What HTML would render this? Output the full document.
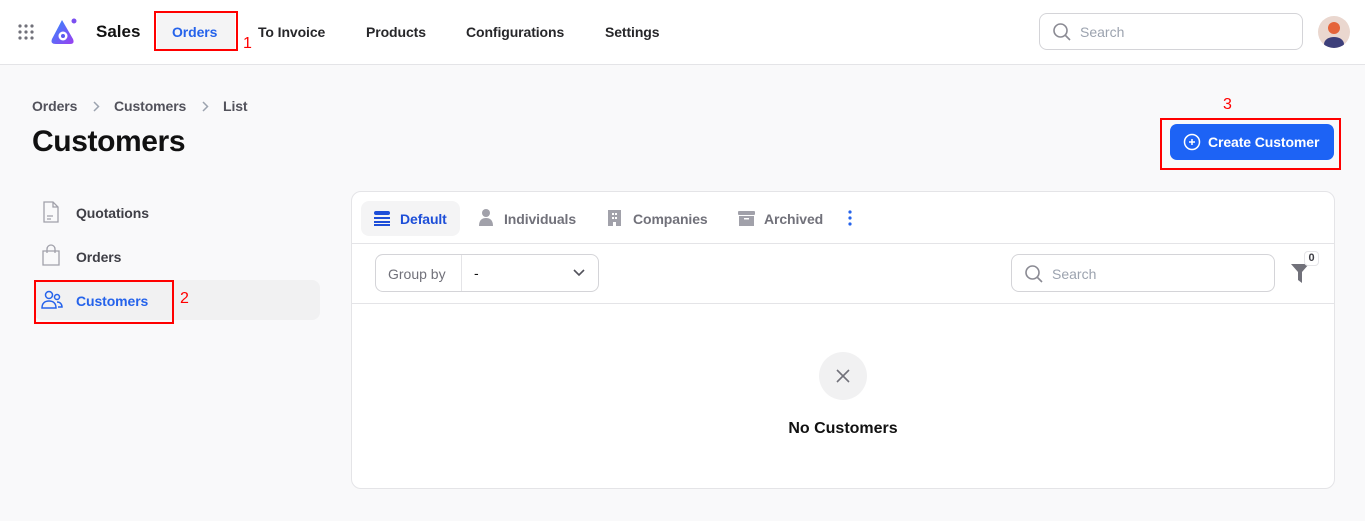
<!DOCTYPE html>
<html><head><meta charset="utf-8"><style>
*{box-sizing:border-box;margin:0;padding:0}
body{width:1365px;height:521px;background:#f9f9fa;font-family:"Liberation Sans",sans-serif;position:relative;overflow:hidden;color:#111}
.abs{position:absolute}
.hdr{left:0;top:0;width:1365px;height:65px;background:#fff;border-bottom:1px solid #e4e4e7}
.nav{font-size:14px;font-weight:bold;color:#27272a;top:24px;letter-spacing:-0.1px}
.red{border:2px solid #f00}
.rn{color:#f00;font-size:16px}
.side{font-size:14px;font-weight:bold;color:#3f3f46;letter-spacing:-0.1px}
.card{left:351px;top:191px;width:984px;height:298px;background:#fff;border:1px solid #e4e4e7;border-radius:10px}
.tab{font-size:14px;font-weight:bold;color:#71717a;top:19px;letter-spacing:-0.1px}
.bc{top:98px;font-size:14px;font-weight:bold;color:#52525b;letter-spacing:-0.1px}
</style></head><body>
<div class="abs hdr"></div>
<svg class="abs" style="left:18px;top:24px" width="16" height="16" viewBox="0 0 16 16" fill="#71717a"><circle cx="2" cy="2" r="1.6"/><circle cx="8" cy="2" r="1.6"/><circle cx="14" cy="2" r="1.6"/><circle cx="2" cy="8" r="1.6"/><circle cx="8" cy="8" r="1.6"/><circle cx="14" cy="8" r="1.6"/><circle cx="2" cy="14" r="1.6"/><circle cx="8" cy="14" r="1.6"/><circle cx="14" cy="14" r="1.6"/></svg>
<svg class="abs" style="left:50px;top:17px" width="30" height="28" viewBox="0 0 30 28"><defs><linearGradient id="g" x1="0" y1="0" x2="1" y2="1"><stop offset="0" stop-color="#2b8cff"/><stop offset="1" stop-color="#9b3ff0"/></linearGradient></defs><path d="M12 3 L2 22 Q0 27 6 27 L20 27 Q25 27 23 22 Z" fill="url(#g)"/><circle cx="13" cy="19" r="4.5" fill="#fff"/><circle cx="13" cy="19" r="2" fill="#5a5af0"/><circle cx="24" cy="4" r="2.5" fill="#7b4ff0"/></svg>
<div class="abs" style="left:96px;top:22px;font-size:17px;font-weight:bold">Sales</div>
<div class="abs" style="left:157px;top:13px;width:78px;height:36px;background:#f4f4f5"></div>
<div class="abs red" style="left:154px;top:11px;width:84px;height:40px"></div>
<div class="abs nav" style="left:172px;color:#2563eb">Orders</div>
<div class="abs rn" style="left:243px;top:35px">1</div>
<div class="abs nav" style="left:258px">To Invoice</div>
<div class="abs nav" style="left:366px">Products</div>
<div class="abs nav" style="left:466px">Configurations</div>
<div class="abs nav" style="left:605px">Settings</div>
<div class="abs" style="left:1039px;top:13px;width:264px;height:37px;border:1px solid #d4d4d8;border-radius:8px;background:#fff"></div>
<svg class="abs" style="left:1052px;top:22px" width="20" height="20" viewBox="0 0 20 20" fill="none" stroke="#8a8a93" stroke-width="1.6"><circle cx="8.5" cy="8.5" r="6.5"/><path d="M13.5 13.5 L18 18"/></svg>
<div class="abs" style="left:1080px;top:24px;font-size:14px;color:#9ca3af">Search</div>
<div class="abs" style="left:1318px;top:16px;width:32px;height:32px;border-radius:50%;background:#ead7cf;overflow:hidden"><div class="abs" style="left:6px;top:21px;width:20px;height:14px;border-radius:50% 50% 0 0;background:#3d3f7a"></div><div class="abs" style="left:10px;top:6px;width:12px;height:12px;border-radius:50%;background:#e5643a"></div></div>
<div class="abs bc" style="left:32px">Orders</div>
<svg class="abs" style="left:93px;top:101px" width="7" height="11" viewBox="0 0 7 11" fill="none" stroke="#9ca3af" stroke-width="1.5"><path d="M1 1l4.5 4.5L1 10"/></svg>
<div class="abs bc" style="left:114px">Customers</div>
<svg class="abs" style="left:202px;top:101px" width="7" height="11" viewBox="0 0 7 11" fill="none" stroke="#9ca3af" stroke-width="1.5"><path d="M1 1l4.5 4.5L1 10"/></svg>
<div class="abs bc" style="left:223px">List</div>
<div class="abs" style="left:32px;top:125px;font-size:30px;font-weight:bold;letter-spacing:-0.4px">Customers</div>
<div class="abs rn" style="left:1223px;top:96px">3</div>
<div class="abs red" style="left:1160px;top:118px;width:181px;height:52px"></div>
<div class="abs" style="left:1170px;top:124px;width:164px;height:36px;background:#1d63f5;border-radius:7px;color:#fff;font-size:14px;font-weight:bold;line-height:36px;padding-left:38px;letter-spacing:-0.1px">Create Customer</div>
<svg class="abs" style="left:1183px;top:133px" width="18" height="18" viewBox="0 0 18 18" fill="none" stroke="#fff" stroke-width="1.5"><circle cx="9" cy="9" r="7.5"/><path d="M9 6v6M6 9h6"/></svg>
<svg class="abs" style="left:42px;top:201px" width="18" height="22" viewBox="0 0 18 22" fill="none" stroke="#a1a1aa" stroke-width="1.3"><path d="M2 1h9l5 5v15H2z M11 1v5h5 M5 15h6 M5 18h4"/></svg>
<div class="abs side" style="left:76px;top:205px">Quotations</div>
<svg class="abs" style="left:41px;top:244px" width="20" height="22" viewBox="0 0 20 22" fill="none" stroke="#a1a1aa" stroke-width="1.3"><path d="M2 7h16v14H2z M6 9V5a4 4 0 0 1 8 0v4"/></svg>
<div class="abs side" style="left:76px;top:249px">Orders</div>
<div class="abs" style="left:34px;top:280px;width:286px;height:40px;background:#f1f1f2;border-radius:8px"></div>
<div class="abs red" style="left:34px;top:280px;width:140px;height:44px"></div>
<svg class="abs" style="left:41px;top:290px" width="22" height="20" viewBox="0 0 22 20" fill="none" stroke="#2563eb" stroke-width="1.5"><circle cx="8" cy="5" r="3.5"/><path d="M1 18c0-5 3-7 7-7s7 2 7 7z"/><circle cx="16" cy="7" r="2.5"/><path d="M16 12c3 0 5 2 5 5h-4"/></svg>
<div class="abs side" style="left:76px;top:293px;color:#2563eb">Customers</div>
<div class="abs rn" style="left:180px;top:290px">2</div>
<div class="abs card">
<div class="abs" style="left:9px;top:9px;width:99px;height:35px;background:#f4f4f5;border-radius:8px"></div>
<svg class="abs" style="left:22px;top:19px" width="16" height="15" viewBox="0 0 16 15" fill="#1d4ed8"><rect y="0" width="16" height="4" rx="2"/><rect y="6" width="16" height="2"/><rect y="10" width="16" height="2"/><rect y="13" width="16" height="2"/></svg>
<div class="abs tab" style="left:48px;color:#1d4ed8">Default</div>
<svg class="abs" style="left:127px;top:17px" width="14" height="17" viewBox="0 0 14 17" fill="#a1a1aa"><circle cx="7" cy="4" r="4"/><path d="M0 17c0-6 3-8 7-8s7 2 7 8z"/></svg>
<div class="abs tab" style="left:152px">Individuals</div>
<svg class="abs" style="left:256px;top:18px" width="13" height="16" viewBox="0 0 13 16" fill="#a1a1aa"><path d="M0 0h13v16H8v-4H5v4H0z"/><rect x="4" y="3" width="2" height="2" fill="#fff"/><rect x="7" y="3" width="2" height="2" fill="#fff"/><rect x="4" y="7" width="2" height="2" fill="#fff"/><rect x="7" y="7" width="2" height="2" fill="#fff"/></svg>
<div class="abs tab" style="left:281px">Companies</div>
<svg class="abs" style="left:386px;top:19px" width="17" height="15" viewBox="0 0 17 15" fill="#a1a1aa"><rect width="17" height="4" rx="1"/><path d="M1 5h15v10H1z"/><rect x="6" y="7" width="5" height="1.5" fill="#fff"/></svg>
<div class="abs tab" style="left:412px">Archived</div>
<svg class="abs" style="left:496px;top:18px" width="4" height="16" viewBox="0 0 4 16" fill="#2563eb"><circle cx="2" cy="2" r="1.6"/><circle cx="2" cy="8" r="1.6"/><circle cx="2" cy="14" r="1.6"/></svg>
<div class="abs" style="left:0;top:51px;width:982px;border-top:1px solid #e4e4e7"></div>
<div class="abs" style="left:23px;top:62px;width:224px;height:38px;border:1px solid #d4d4d8;border-radius:8px"></div>
<div class="abs" style="left:109px;top:63px;height:36px;border-left:1px solid #e4e4e7"></div>
<div class="abs" style="left:36px;top:74px;font-size:14px;color:#71717a">Group by</div>
<div class="abs" style="left:122px;top:73px;font-size:14px">-</div>
<svg class="abs" style="left:221px;top:77px" width="12" height="8" viewBox="0 0 12 8" fill="none" stroke="#52525b" stroke-width="1.6"><path d="M1 1l5 5 5-5"/></svg>
<div class="abs" style="left:659px;top:62px;width:264px;height:38px;border:1px solid #d4d4d8;border-radius:8px"></div>
<svg class="abs" style="left:672px;top:72px" width="20" height="20" viewBox="0 0 20 20" fill="none" stroke="#8a8a93" stroke-width="1.6"><circle cx="8.5" cy="8.5" r="6.5"/><path d="M13.5 13.5 L18 18"/></svg>
<div class="abs" style="left:700px;top:74px;font-size:14px;color:#9ca3af">Search</div>
<svg class="abs" style="left:939px;top:72px" width="18" height="19" viewBox="0 0 18 19" fill="#71717a"><path d="M0 0h18l-7 8v11l-4-3V8z"/></svg>
<div class="abs" style="left:952px;top:59px;width:15px;height:15px;background:#fff;border:1px solid #e4e4e7;border-radius:4px;font-size:11px;font-weight:bold;text-align:center;line-height:13px;color:#3f3f46">0</div>
<div class="abs" style="left:0;top:111px;width:982px;border-top:1px solid #e4e4e7"></div>
<div class="abs" style="left:467px;top:160px;width:48px;height:48px;border-radius:50%;background:#f1f1f2"></div>
<svg class="abs" style="left:484px;top:177px" width="14" height="14" viewBox="0 0 14 14" stroke="#71717a" stroke-width="1.6"><path d="M1 1l12 12M13 1L1 13"/></svg>
<div class="abs" style="left:0;top:228px;width:982px;text-align:center;font-size:16px;font-weight:bold">No Customers</div>
</div>
</body></html>
